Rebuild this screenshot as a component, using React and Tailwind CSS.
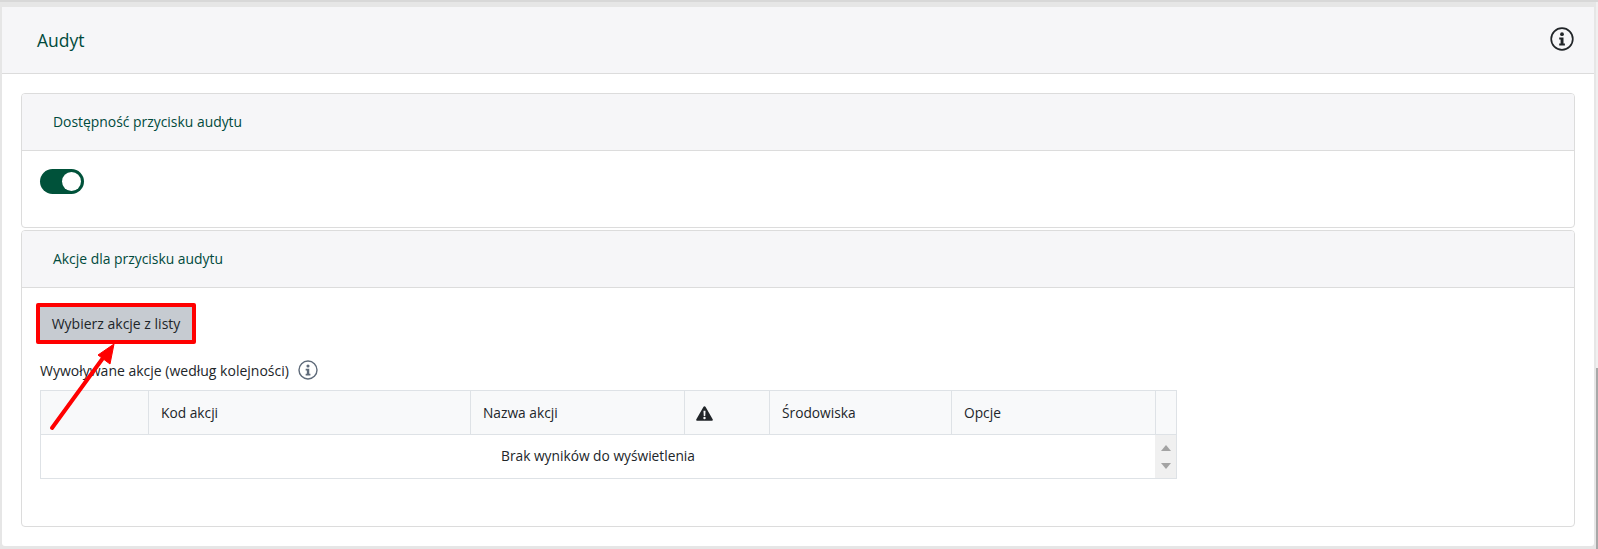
const InfoIcon = ({ className }) => (
  <svg viewBox="0 0 24 24" className={className} fill="none">
    <circle cx="12" cy="12" r="10.8" stroke="currentColor" strokeWidth="1.7" />
    <circle cx="12" cy="7.2" r="1.9" fill="currentColor" />
    <path d="M9.2 10.6h4.3v6h1.4v2H9.2v-2h1.4v-4H9.2z" fill="currentColor" />
  </svg>
);

const WarningIcon = () => (
  <svg viewBox="0 0 18 16" className="w-[17px] h-[15px] -ml-[1px]">
    <path
      fillRule="evenodd"
      fill="#212529"
      d="M9 0.3c.5 0 .9.3 1.2.7l7.5 13c.5.8-.1 1.8-1 1.8H1.3c-.9 0-1.5-1-1-1.8L7.8 1C8.1.6 8.5.3 9 .3zM7.9 5l.3 5.6h1.6L10.100 5zM9 11.400a1.300 1.300 0 1 0 0 2.600 1.300 1.300 0 0 0 0-2.600z"
    />
  </svg>
);

const SectionHeader = ({ children }) => (
  <div className="h-[57px] flex items-center pl-[31px] bg-[#f6f6f8] border-b border-[#dcdcdc] text-[13.9px] text-[#004a3c]">
    {children}
  </div>
);

const columns = [
  { width: 'w-[108px]', label: '' },
  { width: 'w-[322px]', label: 'Kod akcji' },
  { width: 'w-[214px]', label: 'Nazwa akcji' },
  { width: 'w-[85px]', label: 'warning' },
  { width: 'w-[182px]', label: 'Środowiska' },
  { width: 'w-[204px]', label: 'Opcje' },
  { width: 'flex-1', label: '' },
];

const App = () => {
  return (
    <div className="relative h-[549px] w-[1598px] overflow-hidden bg-[#e6e6e6] pl-[2px] pr-[4px] pb-[3px] font-['Open_Sans',sans-serif] text-[#212529] flex flex-col">
      <div className="h-[2px] -ml-[2px] -mr-[4px] mb-[5px] shrink-0 bg-[#d8d8d8]" />
      <div className="flex-1 bg-white rounded-[3px] flex flex-col">
        <div className="h-[67px] shrink-0 flex items-center justify-between pl-[35px] pr-[20px] bg-[#f6f6f8] border-b border-[#dcdcdc]">
          <span className="text-[17.5px] text-[#004a3c]">Audyt</span>
          <InfoIcon className="w-[24px] h-[24px] -mt-[2px] text-[#212529]" />
        </div>

        <div className="px-[19px] pt-[19px]">
          <div className="h-[135px] border border-[#dcdcdc] rounded-[4px] overflow-hidden">
            <SectionHeader>Dostępność przycisku audytu</SectionHeader>
            <div className="pl-[18px] pt-[18px]">
              <div className="w-[44px] h-[25px] rounded-full bg-[#00523a] flex items-center justify-end pr-[3px]">
                <div className="w-[19px] h-[19px] rounded-full bg-white" />
              </div>
            </div>
          </div>

          <div className="h-[297px] mt-[2px] border border-[#dcdcdc] rounded-[4px] overflow-hidden">
            <SectionHeader>Akcje dla przycisku audytu</SectionHeader>
            <div className="pl-[14px] pt-[15px]">
              <button className="block h-[41px] w-[160px] border-[4px] border-[#ff0000] rounded-[2px] bg-[#c6cbd1] text-[14px] text-[#212529]">
                Wybierz akcje z listy
              </button>
              <div className="pl-[4px] mt-[13px] h-[26px] flex items-center gap-[9px] text-[14px]">
                <span>Wywoływane akcje (według kolejności)</span>
                <InfoIcon className="w-[20px] h-[20px] text-[#5f6b7a]" />
              </div>
              <div className="ml-[4px] mt-[7px] w-[1137px] border border-[#dee2e6]">
                <div className="flex h-[44px] bg-[#f8f9fa] border-b border-[#dee2e6] text-[13.75px]">
                  {columns.map((col, i) => (
                    <div
                      key={i}
                      className={`${col.width} flex items-center pl-[12px] pt-[1px] border-r border-[#dee2e6] last:border-r-0`}
                    >
                      {col.label === 'warning' ? <WarningIcon /> : col.label}
                    </div>
                  ))}
                </div>
                <div className="flex h-[43px] text-[13.75px]">
                  <div className="flex-1 flex items-center justify-center">Brak wyników do wyświetlenia</div>
                  <div className="w-[21px] bg-[#f0f0f0] flex flex-col items-center justify-center gap-[12px]">
                    <div className="w-0 h-0 border-x-[5px] border-x-transparent border-b-[6px] border-b-[#a3a3a3]" />
                    <div className="w-0 h-0 border-x-[5px] border-x-transparent border-t-[6px] border-t-[#a3a3a3]" />
                  </div>
                </div>
              </div>
            </div>
          </div>
        </div>
      </div>

      {/* annotation arrow over the button */}
      <svg className="absolute left-0 top-0 w-[1598px] h-[549px] pointer-events-none" viewBox="0 0 1598 549">
        <path d="M52 428 L103 358" stroke="#ff0000" strokeWidth="4" strokeLinecap="round" fill="none" />
        <path d="M114 344 L98 355 L110 364 Z" fill="#ff0000" stroke="#ff0000" strokeWidth="1" />
      </svg>
      {/* page scrollbar at the right edge */}
      <div className="absolute right-0 top-[2px] bottom-0 w-[2px] bg-[#f0f0f0]" />
      <div className="absolute right-0 top-[368px] bottom-0 w-[2px] bg-[#a8a8a8]" />
    </div>
  );
};

export default App;
